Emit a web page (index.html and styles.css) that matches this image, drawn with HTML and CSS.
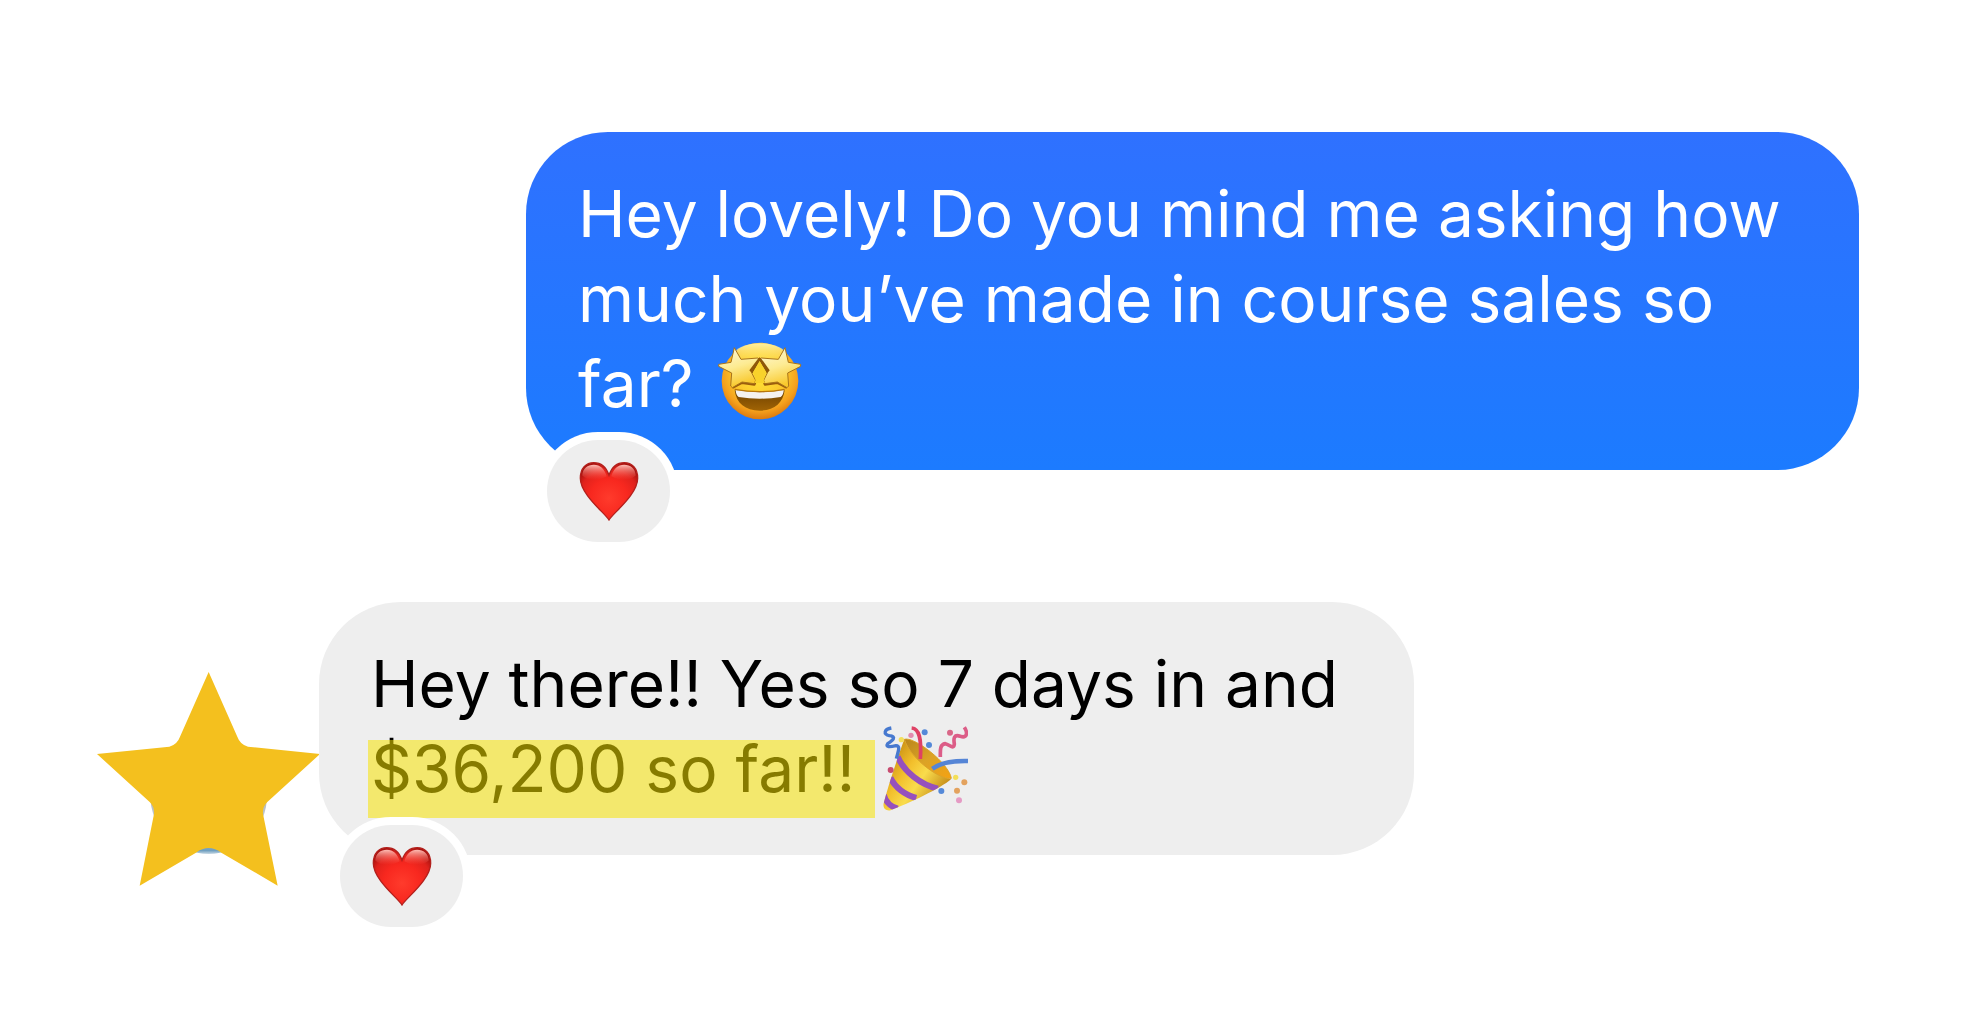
FILE: index.html
```html
<!DOCTYPE html>
<html lang="en">
<head>
<meta charset="utf-8">
<meta name="viewport" content="width=device-width, initial-scale=1">
<title>Chat</title>
<link rel="stylesheet" href="styles.css">
</head>
<body>
<svg class="defs" aria-hidden="true">
  <defs>
    <radialGradient id="heartFill" cx=".5" cy=".62" r=".65">
      <stop offset="0" stop-color="#ff3b2c"/>
      <stop offset=".5" stop-color="#f8281f"/>
      <stop offset=".8" stop-color="#e0221c"/>
      <stop offset="1" stop-color="#a8120f"/>
    </radialGradient>
    <linearGradient id="heartShine" x1="0" y1="0" x2="0" y2="1">
      <stop offset="0" stop-color="#ffc0b8"/>
      <stop offset="1" stop-color="#ff5a4e" stop-opacity="0"/>
    </linearGradient>
    <symbol id="heart" viewBox="145 122 182 182">
      <path fill="url(#heartFill)" stroke="#b3201c" stroke-width="4" d="M236 301C225 281 149 224 149 174C149 144 166 127 190 127C211 127 228 141 236 165C244 141 261 127 282 127C306 127 323 144 323 174C323 224 247 281 236 301Z"/>
      <path fill="url(#heartShine)" d="M155 166C156 144 171 133 190 133C209 133 223 146 229 168C205 182 175 184 155 166ZM317 166C316 144 301 133 282 133C263 133 249 146 243 168C267 182 297 184 317 166Z"/>
    </symbol>
  </defs>
</svg>

<main class="chat">
  <article class="row row-sent">
    <div class="bubble bubble-sent">
      <p class="text">Hey lovely! Do you mind me asking how much you’ve made in course sales so far? <svg class="emoji" viewBox="49 48 255 255" role="img" aria-label="Star-struck face">
        <defs>
          <radialGradient id="face" cx=".5" cy=".4" r=".6">
            <stop offset="0" stop-color="#ffe83a"/>
            <stop offset=".55" stop-color="#fbc72c"/>
            <stop offset=".82" stop-color="#f5a01c"/>
            <stop offset="1" stop-color="#dc7a10"/>
          </radialGradient>
          <linearGradient id="faceShine" x1="0" y1="0" x2="0" y2="1">
            <stop offset="0" stop-color="#fff1a0"/>
            <stop offset="1" stop-color="#ffe450" stop-opacity="0"/>
          </linearGradient>
          <linearGradient id="eye" x1="0" y1="0" x2=".3" y2="1">
            <stop offset="0" stop-color="#fff8dc"/>
            <stop offset=".55" stop-color="#fdeb92"/>
            <stop offset="1" stop-color="#f9c92e"/>
          </linearGradient>
          <linearGradient id="mouth" x1="0" y1="0" x2="0" y2="1">
            <stop offset="0" stop-color="#6f4200"/>
            <stop offset="1" stop-color="#a06305"/>
          </linearGradient>
        </defs>
        <circle cx="178" cy="168" r="115" fill="url(#face)"/>
        <ellipse cx="178" cy="92" rx="80" ry="37" fill="url(#faceShine)"/>
        <path d="M95 188L124 173L161 178L165 166M259 188L230 173L193 178L189 166" fill="none" stroke="#9b5c0c" stroke-width="8" stroke-linejoin="round"/>
        <g fill="url(#eye)" stroke="#a8731a" stroke-width="3" stroke-linejoin="round">
          <path d="M101 68L121 103L172 99L177 104L149 136L165 166L161 176L124 171L95 188L90 183L93 144L54 124L54 118L91 112Z"/>
          <path d="M253 68L233 103L182 99L177 104L204 136L189 166L193 176L230 171L259 188L264 183L261 144L300 124L300 118L263 112Z"/>
        </g>
        <path d="M172 101L177 97L182 101L207 136L198 145L177 108L156 145L146 136Z" fill="#8e5709"/>
        <path d="M177 109L197 142L189 166L193 174H161L165 166L157 142Z" fill="#f8d22b"/>
        <path d="M102 196Q177 208 252 196C247 235 220 257 177 257C134 257 107 235 102 196Z" fill="url(#mouth)"/>
        <path d="M105 195Q177 208 249 195Q249 209 240 216Q177 226 114 216Q105 209 105 195Z" fill="#f5f2ef"/>
        <path d="M102 193Q177 207 252 193" fill="none" stroke="#b8770c" stroke-width="4"/>
      </svg></p>
      <button class="reaction" type="button" aria-label="Heart reaction"><svg class="heart"><use href="#heart"/></svg></button>
    </div>
  </article>

  <article class="row row-received">
    <svg class="star" viewBox="51 66 669 642" role="img" aria-label="Sender">
      <defs>
        <linearGradient id="avatar" x1="0" y1="0" x2="0" y2="1">
          <stop offset="0" stop-color="#f4c01e"/>
          <stop offset=".45" stop-color="#f4c01e"/>
          <stop offset=".58" stop-color="#b9bdc0"/>
          <stop offset=".8" stop-color="#c6d2da"/>
          <stop offset=".97" stop-color="#6f9fc0"/>
          <stop offset="1" stop-color="#c9d9e4"/>
        </linearGradient>
      </defs>
      <circle cx="386" cy="437" r="175" fill="url(#avatar)"/>
      <path fill="#f4c01e" d="M386 66L472 260Q480 283 504 290L720 312L562 456Q547 470 549 492L593 707L424 608Q386 580 348 608L179 707L222 492Q224 470 209 456L51 312L268 290Q292 283 300 260Z"/>
    </svg>
    <div class="bubble bubble-received">
      <p class="text">Hey there!! Yes so 7 days in and <mark class="highlight">$36,200 so far!!</mark> <svg class="emoji" viewBox="42 48 255 255" role="img" aria-label="Party popper">
        <defs>
          <linearGradient id="cone" x1="0" y1=".3" x2=".8" y2=".9">
            <stop offset="0" stop-color="#c58a10"/>
            <stop offset=".35" stop-color="#f2bf2c"/>
            <stop offset=".6" stop-color="#f9dc4c"/>
            <stop offset="1" stop-color="#c18412"/>
          </linearGradient>
          <linearGradient id="coneInside" x1="0" y1="0" x2="1" y2="1">
            <stop offset="0" stop-color="#b9851b"/>
            <stop offset=".5" stop-color="#dba326"/>
            <stop offset="1" stop-color="#f5a212"/>
          </linearGradient>
          <clipPath id="coneClip"><path d="M106 88C130 145 190 190 246 208C215 235 120 280 65 301C50 304 41 294 44 280C60 220 85 145 106 88Z"/></clipPath>
        </defs>
        <path d="M106 88C130 145 190 190 246 208C215 235 120 280 65 301C50 304 41 294 44 280C60 220 85 145 106 88Z" fill="url(#cone)"/>
        <g clip-path="url(#coneClip)" fill="none" stroke="#9650bd" stroke-width="18">
          <path d="M86 140C105 185 155 225 207 236"/>
          <path d="M64 203C78 232 108 256 142 264"/>
          <path d="M44 254C50 276 66 290 86 296"/>
        </g>
        <path d="M106 88C135 78 240 160 247 205C220 213 125 150 106 88Z" fill="url(#coneInside)" stroke="#dba32b" stroke-width="3"/>
        <g fill="none" stroke-linecap="butt">
          <path d="M128 54C151 56 158 85 154 147" stroke="#df4165" stroke-width="11"/>
          <path d="M190 176C218 155 255 152 297 153" stroke="#5585d6" stroke-width="13"/>
          <path d="M67 54C45 58 42 73 61 77C84 80 72 91 56 101C48 112 63 111 81 107C96 108 87 125 82 146" stroke="#4779cf" stroke-width="10"/>
          <path d="M286 52C298 70 293 85 274 79C255 72 253 84 256 102C254 120 242 104 229 101C212 104 214 120 214 141" stroke="#dc5d87" stroke-width="11"/>
        </g>
        <g>
          <circle cx="167" cy="67" r="9" fill="#5589d8"/>
          <circle cx="180" cy="105" r="9" fill="#5589d8"/>
          <circle cx="217" cy="243" r="9" fill="#5589d8"/>
          <circle cx="126" cy="76" r="8" fill="#e28caf"/>
          <circle cx="243" cy="68" r="9" fill="#d96788"/>
          <circle cx="65" cy="180" r="9" fill="#c84c70"/>
          <circle cx="97" cy="89" r="8" fill="#f3df58"/>
          <circle cx="260" cy="202" r="8" fill="#f3df58"/>
          <circle cx="286" cy="217" r="9" fill="#e3a25e"/>
          <circle cx="264" cy="242" r="9" fill="#e3a25e"/>
          <circle cx="270" cy="271" r="9" fill="#e59ac4"/>
        </g>
      </svg></p>
      <button class="reaction" type="button" aria-label="Heart reaction"><svg class="heart"><use href="#heart"/></svg></button>
    </div>
  </article>
</main>
</body>
</html>
```
FILE: styles.css
```css
* {
  box-sizing: border-box;
}

body {
  margin: 0;
  background: #fff;
  color: #000;
  font-family: Inter, "Liberation Sans", sans-serif;
}

.defs {
  position: absolute;
  width: 0;
  height: 0;
}

.chat {
  display: flex;
  flex-direction: column;
  gap: 132px;
  padding: 132px 126px 100px 97px;
}

.row {
  display: flex;
  align-items: flex-start;
}

.row-sent {
  justify-content: flex-end;
}

.bubble {
  position: relative;
  padding: 39px 48px 44px 52px;
  border-radius: 82px;
}

.bubble-sent {
  max-width: 1333px;
  background: linear-gradient(#2f71ff, #1c7bff);
  color: #fff;
}

.bubble-received {
  max-width: 1095px;
  background: #eee;
}

.text {
  margin: 0;
  font-size: 64px;
  line-height: 85px;
}

.emoji {
  width: 85px;
  height: 85px;
  margin-left: 6px;
  vertical-align: -19px;
}

/* Translucent marker strip laid over the words */
.highlight {
  position: relative;
  margin-right: 4px;
  background: none;
  color: inherit;
}

.highlight::after {
  content: "";
  position: absolute;
  inset: 10px -20px -11px -3px;
  background: rgba(247, 227, 0, 0.54);
}

.reaction {
  position: absolute;
  left: 21px;
  bottom: -72px;
  display: flex;
  align-items: center;
  justify-content: center;
  width: 123px;
  height: 102px;
  padding: 0;
  border: 0;
  border-radius: 51px;
  background: #eee;
  box-shadow: 0 0 0 8px #fff;
}

.heart {
  width: 60px;
  height: 60px;
}

.star {
  flex: none;
  width: 223px;
  height: 214px;
  margin-top: 70px;
  margin-right: -1px;
}
```
